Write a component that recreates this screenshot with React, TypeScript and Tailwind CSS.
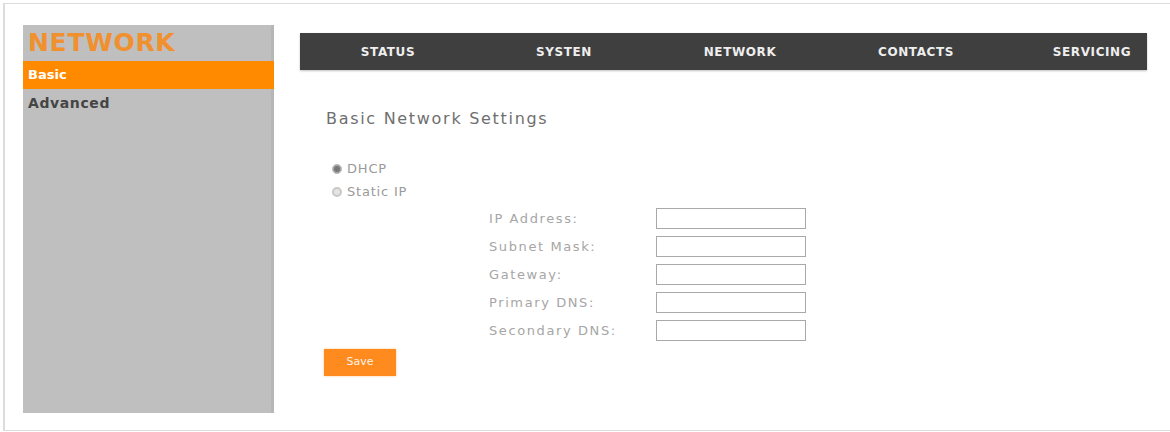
const navItems = ['STATUS', 'SYSTEN', 'NETWORK', 'CONTACTS', 'SERVICING']

const fields = ['IP Address:', 'Subnet Mask:', 'Gateway:', 'Primary DNS:', 'Secondary DNS:']

function Sidebar() {
  return (
    <aside className="flex h-[388px] w-[251px] shrink-0 flex-col bg-[#bfbfbf] shadow-[inset_-3px_0_0_#b6b6b6]">
      <div className="h-[36px] pl-[5px] pt-[3px] text-[25px] font-bold leading-[30px] tracking-[0.7px] text-[#f0902e]">NETWORK</div>
      <div className="flex h-[28px] items-center bg-[#ff8a00] pl-[5px] text-[13px] font-bold text-white">Basic</div>
      <div className="flex h-[28px] items-center pl-[5px] text-[14px] font-bold tracking-[0.6px] text-[#454545]">Advanced</div>
    </aside>
  )
}

function Radio({ checked, label }: { checked?: boolean; label: string }) {
  return (
    <label className="flex h-[23px] items-center pl-[6px] text-[13px] tracking-[0.8px] text-[#9a9a9a]">
      <span
        className={
          checked
            ? 'mr-[5px] h-[10px] w-[10px] rounded-full border border-[#bdbdbd] bg-[#777] shadow-[inset_0_0_0_1px_#aaa]'
            : 'mr-[5px] h-[10px] w-[10px] rounded-full border-2 border-[#c8c8c8] bg-[#e4e4e4]'
        }
      />
      {label}
    </label>
  )
}

export default function App() {
  return (
    <div className="h-[432px] w-[1170px] overflow-hidden bg-white font-['DejaVu_Sans',_'Liberation_Sans',_sans-serif]">
      <div className="ml-[3px] mt-[3px] flex h-[428px] w-[1170px] border-l-2 border-t border-b border-[#dcdcdc] pl-[18px] pt-[21px]">
        <Sidebar />

        <main className="ml-[26px] flex flex-col">
          <nav className="mt-[8px] flex h-[37px] w-[847px] items-center bg-[#3f3f3f] shadow-[0_1px_2px_rgba(0,0,0,0.25)]">
            {navItems.map((item) => (
              <span key={item} className="w-[176px] shrink-0 text-center text-[12px] font-bold tracking-[0.6px] text-[#eeeeee]">
                {item}
              </span>
            ))}
          </nav>

          <div className="pl-[26px]">
            <h1 className="mt-[39px] h-[20px] text-[16px] leading-[20px] tracking-[1.7px] text-[#6f6f6f]">Basic Network Settings</h1>

            <div className="mt-[28px] flex flex-col">
              <Radio checked label="DHCP" />
              <Radio label="Static IP" />
            </div>

            <div className="ml-[163px] mt-[5px] flex flex-col">
              {fields.map((field) => (
                <div key={field} className="flex h-[28px] items-start">
                  <span className="w-[167px] text-[13px] leading-[21px] tracking-[1.6px] text-[#a6a6a6]">{field}</span>
                  <input className="h-[21px] w-[150px] border border-[#a9a9a9] bg-white outline-none" />
                </div>
              ))}
            </div>

            <button className="-ml-[2px] h-[27px] w-[72px] bg-[#ff8a1e] text-[11px] text-[#fff4e8] shadow-[0_0_2px_rgba(255,160,60,0.6)]">
              Save
            </button>
          </div>
        </main>
      </div>
    </div>
  )
}
